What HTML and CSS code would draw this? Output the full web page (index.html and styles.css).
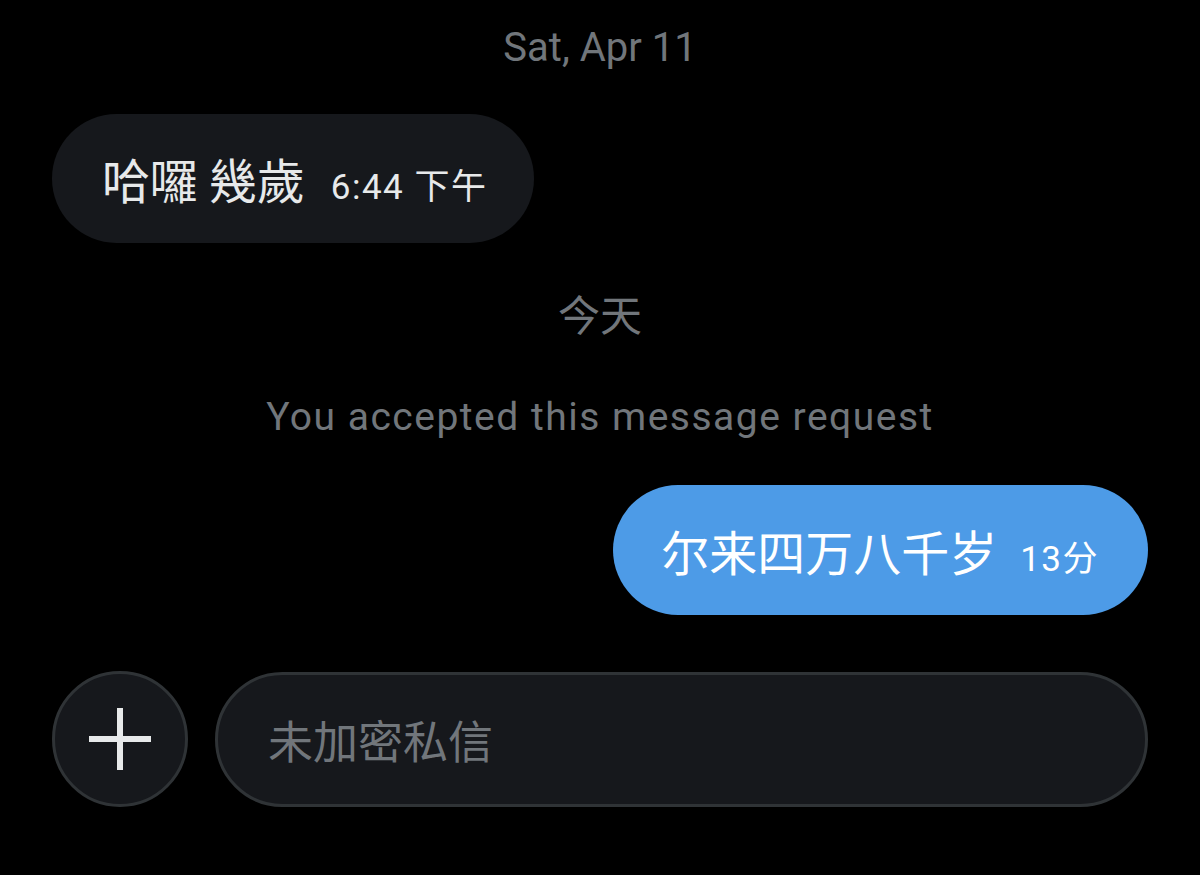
FILE: index.html
```html
<!DOCTYPE html>
<html lang="zh">
<head>
<meta charset="utf-8">
<title>Chat</title>
<link rel="stylesheet" href="styles.css">
</head>
<body>
<main class="chat">
  <div class="day-label">Sat, Apr 11</div>
  <div class="row row-in">
    <div class="bubble bubble-in"><span class="msg msg-tc">哈囉 幾歲</span><span class="time">6:44 下午</span></div>
  </div>
  <div class="day-label day-today">今天</div>
  <div class="notice">You accepted this message request</div>
  <div class="row row-out">
    <div class="bubble bubble-out"><span class="msg msg-sc">尔来四万八千岁</span><span class="time time-out">13分</span></div>
  </div>
  <div class="composer">
    <button class="add-btn" aria-label="Add">
      <svg width="62" height="62" viewBox="0 0 62 62"><rect x="28" y="0" width="6" height="62" fill="#e7e9ea"/><rect x="0" y="28" width="62" height="6" fill="#e7e9ea"/></svg>
    </button>
    <div class="input"><span class="placeholder">未加密私信</span></div>
  </div>
</main>
</body>
</html>
```

FILE: styles.css
```css
html, body {
  margin: 0;
  padding: 0;
  background: #000;
}
body {
  font-family: Roboto, "Noto Sans CJK SC", sans-serif;
  color: #e7e9ea;
}
.chat {
  display: flex;
  flex-direction: column;
  padding: 24px 52px 0 52px;
}
.day-label {
  text-align: center;
  color: #71767b;
  font-size: 40px;
  line-height: 48px;
}
.day-today {
  margin-top: 46px;
  font-family: "Noto Sans CJK SC", sans-serif;
  font-size: 42px;
}
.notice {
  margin-top: 56px;
  text-align: center;
  color: #71767b;
  font-size: 39px;
  letter-spacing: 1.5px;
  line-height: 48px;
}
.row {
  display: flex;
}
.row-in {
  margin-top: 42px;
  justify-content: flex-start;
}
.row-out {
  margin-top: 44px;
  justify-content: flex-end;
}
.bubble {
  height: 130px;
  line-height: 130px;
  border-radius: 65px;
  white-space: nowrap;
  box-sizing: border-box;
}
.bubble-in {
  height: 129px;
  line-height: 129px;
  background: #16181c;
  padding: 0 47px 0 50px;
  color: #e7e9ea;
}
.bubble-out {
  background: #4d9be7;
  padding: 0 49px 0 48px;
  color: #fff;
}
.msg {
  font-size: 48px;
}
.msg-tc {
  font-family: "Noto Sans CJK TC", sans-serif;
}
.msg-sc {
  font-family: "Noto Sans CJK SC", sans-serif;
}
.time {
  font-family: Roboto, "Noto Sans CJK SC", sans-serif;
  font-size: 35px;
  letter-spacing: 1.5px;
  margin-left: 26px;
}
.time-out {
  margin-left: 23px;
}
.composer {
  margin-top: 56px;
  display: flex;
  align-items: center;
  gap: 27px;
}
.add-btn {
  width: 136px;
  height: 136px;
  flex: 0 0 136px;
  border-radius: 50%;
  background: #16181c;
  border: 3px solid #2f3336;
  box-sizing: border-box;
  display: flex;
  align-items: center;
  justify-content: center;
  padding: 0;
}
.input {
  flex: 1;
  height: 135px;
  box-sizing: border-box;
  border: 3px solid #2f3336;
  background: #16181c;
  border-radius: 68px;
  display: flex;
  align-items: center;
  padding-left: 50px;
}
.placeholder {
  font-family: "Noto Sans CJK SC", sans-serif;
  font-size: 45px;
  color: #71767b;
}
```
